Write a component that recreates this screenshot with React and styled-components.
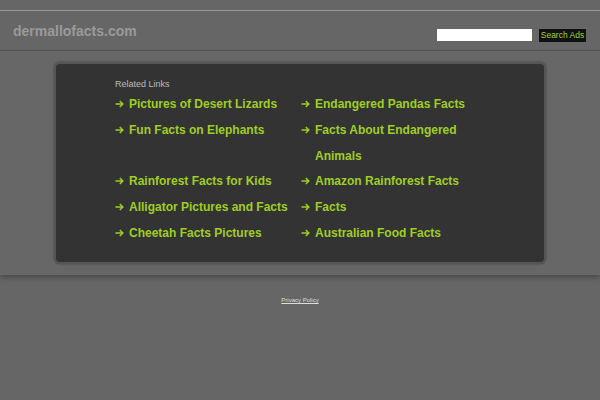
import React from 'react';
import styled, { createGlobalStyle } from 'styled-components';

const GlobalStyle = createGlobalStyle`
  html, body {
    margin: 0;
    padding: 0;
    background: #666666;
    font-family: "Liberation Sans", Arial, Helvetica, sans-serif;
  }
`;

const TopStrip = styled.div`
  height: 10px;
  border-bottom: 1px solid #9a9a9a;
`;

const Header = styled.div`
  height: 39px;
  display: flex;
  align-items: center;
  justify-content: space-between;
  padding: 0 14px 0 13px;
  border-bottom: 1px solid #555555;
`;

const Logo = styled.div`
  font-size: 14px;
  font-weight: 700;
  color: #9a9a9a;
`;

const SearchForm = styled.form`
  display: flex;
  gap: 7px;
  margin-top: 9px;
`;

const SearchInput = styled.input`
  width: 95px;
  height: 12px;
  box-sizing: border-box;
  border: none;
  padding: 0;
  background: #ffffff;
`;

const SearchButton = styled.button`
  height: 13px;
  width: 47px;
  padding: 0;
  border: none;
  background: #111111;
  color: #a5cf3a;
  font-family: "Liberation Sans", Arial, sans-serif;
  font-size: 8.5px;
  line-height: 13px;
  white-space: nowrap;
`;

const Band = styled.div`
  padding: 11px 0;
  box-shadow: 0 3px 5px rgba(0, 0, 0, 0.25);
  background: #676767;
`;

const Panel = styled.div`
  width: 492px;
  height: 202px;
  box-sizing: border-box;
  margin: 0 auto;
  background: #333333;
  border: 2px solid #555555;
  border-radius: 6px;
  box-shadow: 0 0 2px rgba(0, 0, 0, 0.4);
  padding: 14px 0 0 59px;
`;

const Caption = styled.div`
  font-size: 9px;
  color: #bbbbbb;
  line-height: 12px;
  margin-bottom: 2px;
`;

const LinkGrid = styled.ul`
  list-style: none;
  margin: 0;
  padding: 0;
  display: grid;
  grid-template-columns: 186px 186px;
`;

const LinkItem = styled.li`
  display: flex;
  align-items: flex-start;
  font-size: 12px;
  font-weight: 700;
  line-height: 25.8px;
  color: #9fce24;
`;

const ArrowIcon = styled.svg`
  flex: none;
  width: 9px;
  height: 8px;
  margin: 8px 5px 0 0;
`;

const LinkText = styled.a`
  color: inherit;
  text-decoration: none;
  max-width: 165px;
`;

const Footer = styled.div`
  text-align: center;
  padding-top: 21px;
  font-size: 6px;
  line-height: 8px;
`;

const FooterLink = styled.a`
  color: #dddddd;
  text-decoration: underline;
`;

const links = [
  'Pictures of Desert Lizards',
  'Endangered Pandas Facts',
  'Fun Facts on Elephants',
  'Facts About Endangered Animals',
  'Rainforest Facts for Kids',
  'Amazon Rainforest Facts',
  'Alligator Pictures and Facts',
  'Facts',
  'Cheetah Facts Pictures',
  'Australian Food Facts'
];

const Arrow = () => (
  <ArrowIcon viewBox="0 0 9 8" fill="none" stroke="currentColor" strokeWidth="1.5">
    <path d="M0.5 4H7.8M4.8 1L7.8 4L4.8 7" />
  </ArrowIcon>
);

export default function App() {
  return (
    <>
      <GlobalStyle />
      <TopStrip />
      <Header>
        <Logo>dermallofacts.com</Logo>
        <SearchForm onSubmit={e => e.preventDefault()}>
          <SearchInput type="text" />
          <SearchButton type="submit">Search Ads</SearchButton>
        </SearchForm>
      </Header>
      <Band>
        <Panel>
          <Caption>Related Links</Caption>
          <LinkGrid>
            {links.map(text => (
              <LinkItem key={text}>
                <Arrow />
                <LinkText href="#">{text}</LinkText>
              </LinkItem>
            ))}
          </LinkGrid>
        </Panel>
      </Band>
      <Footer>
        <FooterLink href="#">Privacy Policy</FooterLink>
      </Footer>
    </>
  );
}
